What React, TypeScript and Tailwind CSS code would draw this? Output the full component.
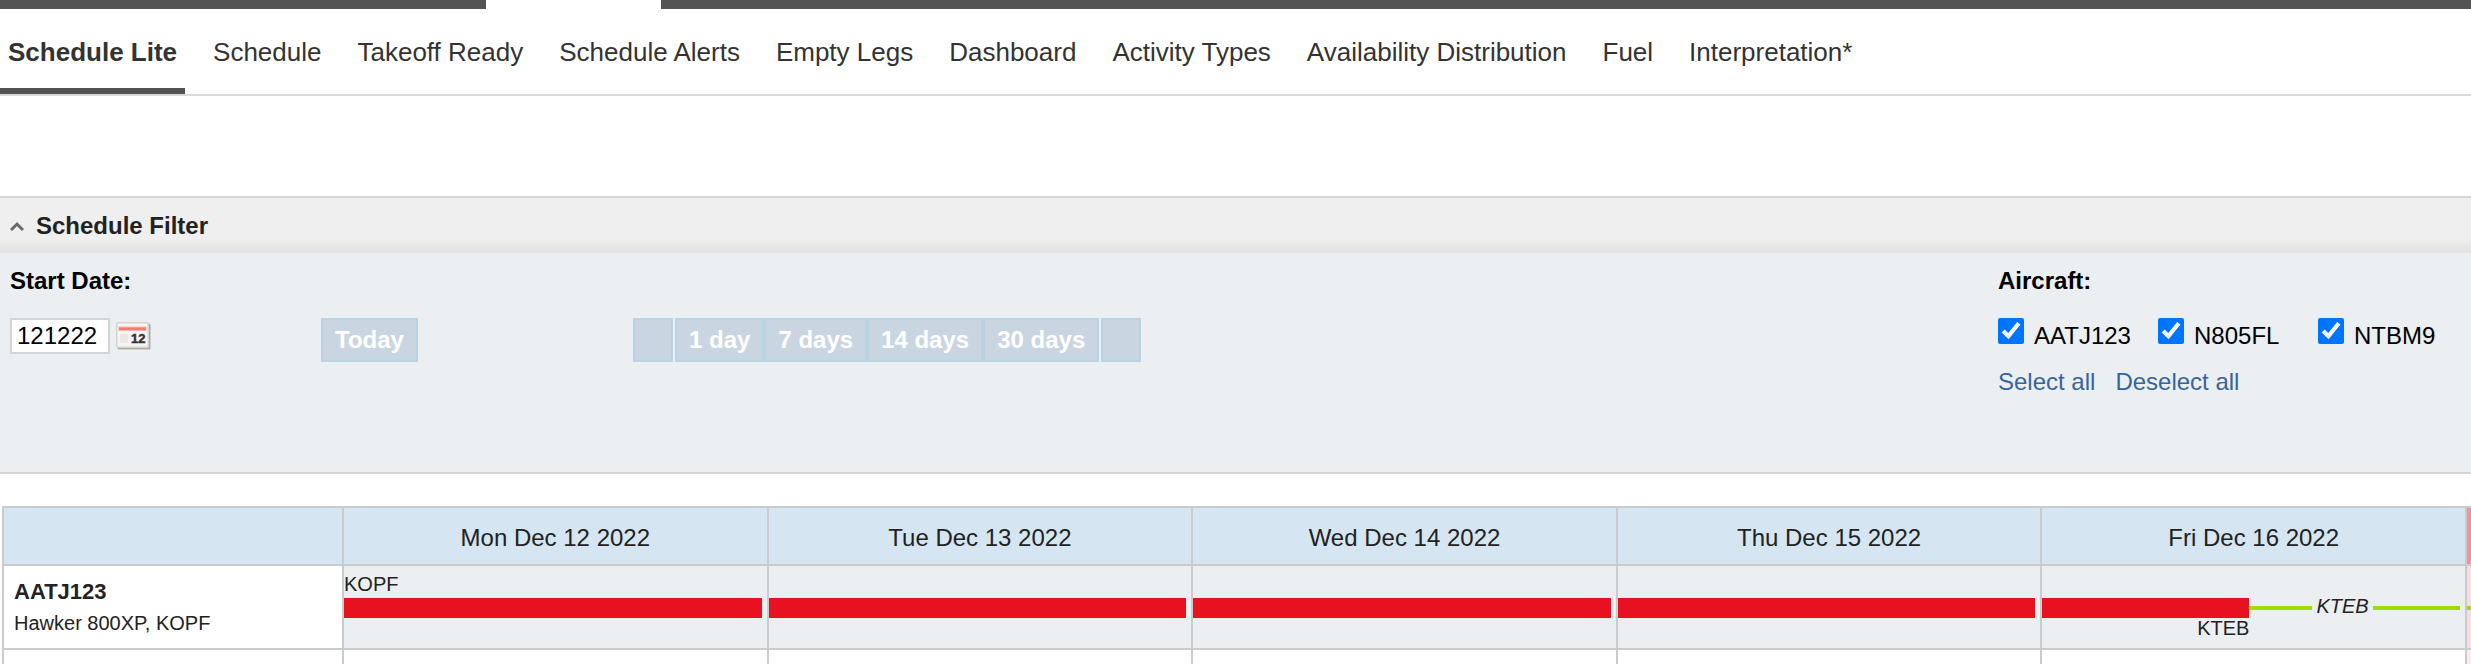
import React from "react";

const tabs = [
  "Schedule Lite",
  "Schedule",
  "Takeoff Ready",
  "Schedule Alerts",
  "Empty Legs",
  "Dashboard",
  "Activity Types",
  "Availability Distribution",
  "Fuel",
  "Interpretation*",
];
const ranges = ["1 day", "7 days", "14 days", "30 days"];
const aircraft = ["AATJ123", "N805FL", "NTBM9"];
const days = [
  "Mon Dec 12 2022",
  "Tue Dec 13 2022",
  "Wed Dec 14 2022",
  "Thu Dec 15 2022",
  "Fri Dec 16 2022",
];

const filterButton =
  "h-11 border-2 border-[#b8d3e3] bg-[#c9d6e2] text-2xl leading-none font-bold text-white";

function CalendarIcon() {
  return (
    <svg width="36" height="28" viewBox="0 0 36 28" aria-hidden="true">
      <rect x="1.5" y="1.5" width="33" height="26" rx="1.5" fill="#acacac" />
      <rect x="0.75" y="0.75" width="31.5" height="24.5" rx="1" fill="#f6f4f3" stroke="#d3d3d3" strokeWidth="1.5" />
      <rect x="2.5" y="4.5" width="28" height="4.5" fill="#fcb3ad" />
      <rect x="3" y="5.5" width="27" height="2.5" fill="#fb7a70" />
      <rect x="4" y="12" width="8" height="9" fill="#ebe8e7" />
      <text x="15" y="21" fontSize="13" fontWeight="700" fill="#333" stroke="#333" strokeWidth="0.5">
        12
      </text>
    </svg>
  );
}

function Schedule() {
  return (
    <table className="w-full table-fixed border-separate border-spacing-0 border-t-2 border-[#cbcbcb] text-[#222]">
      <colgroup>
        <col className="w-[340px]" />
        {days.map((d) => (
          <col key={d} />
        ))}
        <col className="w-[6px]" />
      </colgroup>
      <thead>
        <tr className="h-[58px]">
          <th className="border-b-2 border-l-2 border-[#cbcbcb] bg-[#d5e5f1] p-0" />
          {days.map((d) => (
            <th
              key={d}
              className="border-b-2 border-l-2 border-[#cbcbcb] bg-[#d5e5f1] p-0 pt-1 text-2xl font-normal"
            >
              {d}
            </th>
          ))}
          <th className="border-b-2 border-l-2 border-[#cbcbcb] bg-[#ef949c] p-0" />
        </tr>
      </thead>
      <tbody>
        <tr className="h-[84px]">
          <th className="border-b-2 border-l-2 border-[#cbcbcb] p-0 pl-2.5 text-left align-top font-normal">
            <div className="pt-2.5 text-[22px] leading-8 font-bold">AATJ123</div>
            <div className="text-xl leading-[30px]">Hawker 800XP, KOPF</div>
          </th>
          {days.map((d, i) => (
            <td key={d} className="border-b-2 border-l-2 border-[#cbcbcb] bg-[#ebeff2] p-0 pr-[5px] align-top text-xl">
              <div className="h-8 pt-2 leading-5">{i === 0 ? "KOPF" : ""}</div>
              {i < 4 ? (
                <div className="h-5 bg-[#e81120]" />
              ) : (
                <>
                  <div className="flex h-5 items-center">
                    <div className="h-5 w-[207px] bg-[#e81120]" />
                    <div className="h-1 w-[63px] bg-[#9edb00]" />
                    <div className="px-1 pb-1 leading-6 italic">KTEB</div>
                    <div className="h-1 flex-1 bg-[#9edb00]" />
                  </div>
                  <div className="w-[207px] text-right leading-5">KTEB</div>
                </>
              )}
            </td>
          ))}
          <td className="border-b-2 border-l-2 border-[#cbcbcb] bg-[#fbdcde] p-0 align-top">
            <div className="mt-10 h-1 bg-[#9edb00]" />
          </td>
        </tr>
        <tr className="h-[14px]">
          <th className="border-l-2 border-[#cbcbcb] p-0" />
          {days.map((d) => (
            <td key={d} className="border-l-2 border-[#cbcbcb] p-0" />
          ))}
          <td className="border-l-2 border-[#cbcbcb] bg-[#feeced] p-0" />
        </tr>
      </tbody>
    </table>
  );
}

export default function App() {
  return (
    <div className="overflow-hidden bg-white font-['Liberation_Sans',Arial,sans-serif] text-black">
      <div className="flex h-[9px]">
        <div className="w-[486px] bg-[#535353]" />
        <div className="w-[175px]" />
        <div className="flex-1 bg-[#535353]" />
      </div>
      <nav className="flex border-b-2 border-[#dadada] text-[26px] text-[#333]">
        {tabs.map((t, i) => (
          <a
            key={t}
            href="#"
            className={
              i === 0
                ? "mr-[19px] border-b-6 border-[#535353] pt-2.5 pr-2 pb-0.5 pl-2 leading-[67px] font-bold whitespace-nowrap"
                : "mr-[18px] pt-2.5 pr-[9px] pl-[9px] leading-[67px] whitespace-nowrap"
            }
          >
            {t}
          </a>
        ))}
      </nav>

      <section className="mt-[100px] border-y-2 border-[#d4d4d4] bg-[#ebeff2]">
        <button
          type="button"
          className="flex h-[55px] w-full items-center bg-linear-to-b from-[#efefef] from-75% to-[#e1e1e1] pl-2.5 text-2xl font-bold text-[#222]"
        >
          <svg width="14" height="10" viewBox="0 0 14 10" className="mr-3" aria-hidden="true">
            <path d="M1 9 L7 3 L13 9" fill="none" stroke="#6a6a6a" strokeWidth="3" />
          </svg>
          Schedule Filter
        </button>
        <div className="flex h-[219px] pt-3 text-2xl">
          <div className="w-[311px] pl-2.5">
            <label htmlFor="start" className="block h-[53px] font-bold">
              Start Date:
            </label>
            <div className="flex items-center gap-1.5">
              <input
                id="start"
                defaultValue="121222"
                className="h-9 w-[100px] border-2 border-[#d4d4d4] bg-white px-[5px] text-2xl leading-none"
              />
              <button type="button" aria-label="Pick a date">
                <CalendarIcon />
              </button>
            </div>
          </div>
          <div className="flex pt-[53px] pl-2.5">
            <button type="button" className={filterButton + " w-[97px]"}>
              Today
            </button>
            <div className="ml-[215px] flex gap-0.5">
              <button type="button" aria-label="Earlier" className={filterButton + " w-10"} />
              <div className="flex">
                {ranges.map((r) => (
                  <button key={r} type="button" className={filterButton + " px-3"}>
                    {r}
                  </button>
                ))}
              </div>
              <button type="button" aria-label="Later" className={filterButton + " w-10"} />
            </div>
          </div>
          <fieldset className="ml-auto w-[473px] min-w-0">
            <legend className="h-[53px] font-bold">Aircraft:</legend>
            <div className="flex">
              {aircraft.map((a) => (
                <label key={a} className="flex w-40 shrink-0 gap-2.5">
                  <input type="checkbox" defaultChecked className="size-[26px] accent-[#0075ff]" />
                  <span className="pt-px leading-[34px]">{a}</span>
                </label>
              ))}
            </div>
            <div className="flex gap-5 pt-[13px] text-[#36659c]">
              <a href="#">Select all</a>
              <a href="#">Deselect all</a>
            </div>
          </fieldset>
        </div>
      </section>

      <div className="pt-8 pl-0.5">
        <Schedule />
      </div>
    </div>
  );
}
